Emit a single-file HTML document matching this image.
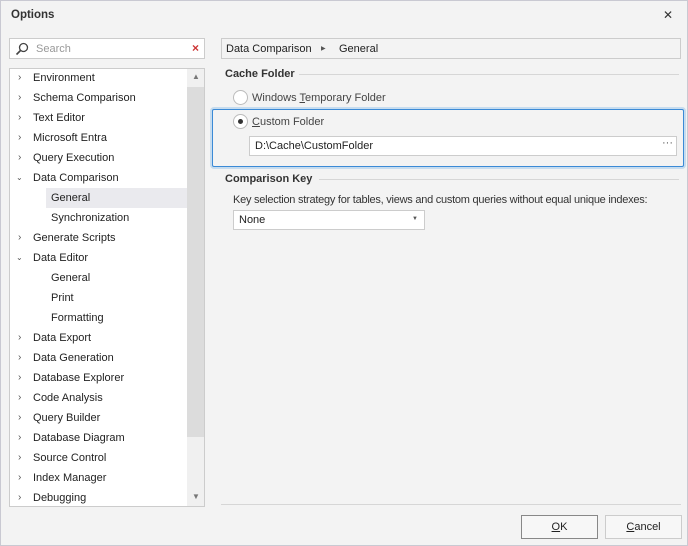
<!DOCTYPE html>
<html><head><style>
*{box-sizing:border-box;margin:0;padding:0}
body{width:688px;height:546px;background:#f3f3f3;font-family:"Liberation Sans",sans-serif;font-size:11px;color:#222;position:relative;overflow:hidden;border:1px solid #c9c9d2;white-space:nowrap}
.a{position:absolute}
.row{position:absolute;left:0;height:20px;line-height:20px;width:178px}
.chev{position:absolute;left:8px;top:0;font-size:10px;color:#555}
.box{background:#fff;border:1px solid #ccc}
.hdr{font-weight:bold;color:#333}
.line{height:1px;background:#d6d6d6}
</style></head><body>
<div class="a hdr" style="left:10px;top:8px;font-size:11.5px">Options</div>
<div class="a" style="left:662px;top:7px;font-size:12px;color:#333">✕</div>

<div class="a box" style="left:8px;top:37px;width:196px;height:21px">
<svg class="a" style="left:5px;top:3px" width="14" height="14"><circle cx="8.5" cy="5.5" r="4" fill="none" stroke="#444" stroke-width="1.3"/><line x1="5.5" y1="8.5" x2="1.5" y2="12.5" stroke="#444" stroke-width="1.6"/></svg>
<div class="a" style="left:26px;top:4px;color:#999">Search</div>
<div class="a" style="left:182px;top:2px;color:#c33;font-size:12px;font-weight:bold">×</div>
</div>

<div class="a box" style="left:8px;top:67px;width:196px;height:439px;overflow:hidden">
<div class="a" style="left:177px;top:0;width:17px;height:437px;background:#f0f0f0"></div>
<div class="a" style="left:177px;top:18px;width:17px;height:350px;background:#dcdcdc"></div>
<div class="a" style="left:182px;top:3px;font-size:8px;color:#777">▲</div>
<div class="a" style="left:182px;top:423px;font-size:8px;color:#777">▼</div>
<div class="a" style="left:36px;top:119px;width:141px;height:20px;background:#eaeaee"></div>
<div style="position:relative;top:-1px">
<div class="row" style="top:0"><span class="chev">›</span><span class="a" style="left:23px">Environment</span></div>
<div class="row" style="top:20px"><span class="chev">›</span><span class="a" style="left:23px">Schema Comparison</span></div>
<div class="row" style="top:40px"><span class="chev">›</span><span class="a" style="left:23px">Text Editor</span></div>
<div class="row" style="top:60px"><span class="chev">›</span><span class="a" style="left:23px">Microsoft Entra</span></div>
<div class="row" style="top:80px"><span class="chev">›</span><span class="a" style="left:23px">Query Execution</span></div>
<div class="row" style="top:100px"><span class="chev" style="left:6px;font-size:8px">⌄</span><span class="a" style="left:23px">Data Comparison</span></div>
<div class="row" style="top:120px"><span class="a" style="left:41px">General</span></div>
<div class="row" style="top:140px"><span class="a" style="left:41px">Synchronization</span></div>
<div class="row" style="top:160px"><span class="chev">›</span><span class="a" style="left:23px">Generate Scripts</span></div>
<div class="row" style="top:180px"><span class="chev" style="left:6px;font-size:8px">⌄</span><span class="a" style="left:23px">Data Editor</span></div>
<div class="row" style="top:200px"><span class="a" style="left:41px">General</span></div>
<div class="row" style="top:220px"><span class="a" style="left:41px">Print</span></div>
<div class="row" style="top:240px"><span class="a" style="left:41px">Formatting</span></div>
<div class="row" style="top:260px"><span class="chev">›</span><span class="a" style="left:23px">Data Export</span></div>
<div class="row" style="top:280px"><span class="chev">›</span><span class="a" style="left:23px">Data Generation</span></div>
<div class="row" style="top:300px"><span class="chev">›</span><span class="a" style="left:23px">Database Explorer</span></div>
<div class="row" style="top:320px"><span class="chev">›</span><span class="a" style="left:23px">Code Analysis</span></div>
<div class="row" style="top:340px"><span class="chev">›</span><span class="a" style="left:23px">Query Builder</span></div>
<div class="row" style="top:360px"><span class="chev">›</span><span class="a" style="left:23px">Database Diagram</span></div>
<div class="row" style="top:380px"><span class="chev">›</span><span class="a" style="left:23px">Source Control</span></div>
<div class="row" style="top:400px"><span class="chev">›</span><span class="a" style="left:23px">Index Manager</span></div>
<div class="row" style="top:420px"><span class="chev">›</span><span class="a" style="left:23px">Debugging</span></div>
</div></div>

<div class="a" style="left:220px;top:37px;width:460px;height:21px;border:1px solid #ccc;background:#f3f3f3">
<span class="a" style="left:4px;top:4px">Data Comparison</span>
<span class="a" style="left:99px;top:6px;font-size:6px;color:#555">▶</span>
<span class="a" style="left:117px;top:4px">General</span></div>

<div class="a hdr" style="left:224px;top:67px">Cache Folder</div>
<div class="a line" style="left:298px;top:73px;width:380px"></div>
<div class="a" style="left:232px;top:89px;width:15px;height:15px;border-radius:50%;border:1px solid #bbb;background:#fff"></div>
<div class="a" style="left:251px;top:91px;color:#444">Windows <u>T</u>emporary Folder</div>

<div class="a" style="left:209px;top:106px;width:476px;height:62px;border:3px solid #c6dcef;border-radius:4px"></div>
<div class="a" style="left:211px;top:108px;width:472px;height:58px;border:1px solid #3b8ad6;border-radius:2px"></div>
<div class="a" style="left:232px;top:113px;width:15px;height:15px;border-radius:50%;border:1px solid #bbb;background:#fff"></div>
<div class="a" style="left:237px;top:118px;width:5px;height:5px;border-radius:50%;background:#333"></div>
<div class="a" style="left:251px;top:115px;color:#444"><u>C</u>ustom Folder</div>
<div class="a box" style="left:248px;top:135px;width:428px;height:20px">
<span class="a" style="left:5px;top:3px">D:\Cache\CustomFolder</span>
<span class="a" style="left:412px;top:0px;color:#555">···</span></div>

<div class="a hdr" style="left:224px;top:172px">Comparison Key</div>
<div class="a line" style="left:318px;top:178px;width:360px"></div>
<div class="a" style="left:232px;top:193px;color:#333;letter-spacing:-0.25px">Key selection strategy for tables, views and custom queries without equal unique indexes:</div>
<div class="a box" style="left:232px;top:209px;width:192px;height:20px">
<span class="a" style="left:5px;top:3px">None</span>
<span class="a" style="left:178px;top:5px;font-size:6px;color:#555">▼</span></div>

<div class="a line" style="left:220px;top:503px;width:460px"></div>
<div class="a" style="left:520px;top:514px;width:77px;height:24px;border:1px solid #888;background:#f7f7f7;text-align:center;line-height:22px"><u>O</u>K</div>
<div class="a" style="left:604px;top:514px;width:77px;height:24px;border:1px solid #ccc;background:#f7f7f7;text-align:center;line-height:22px"><u>C</u>ancel</div>
</body></html>
